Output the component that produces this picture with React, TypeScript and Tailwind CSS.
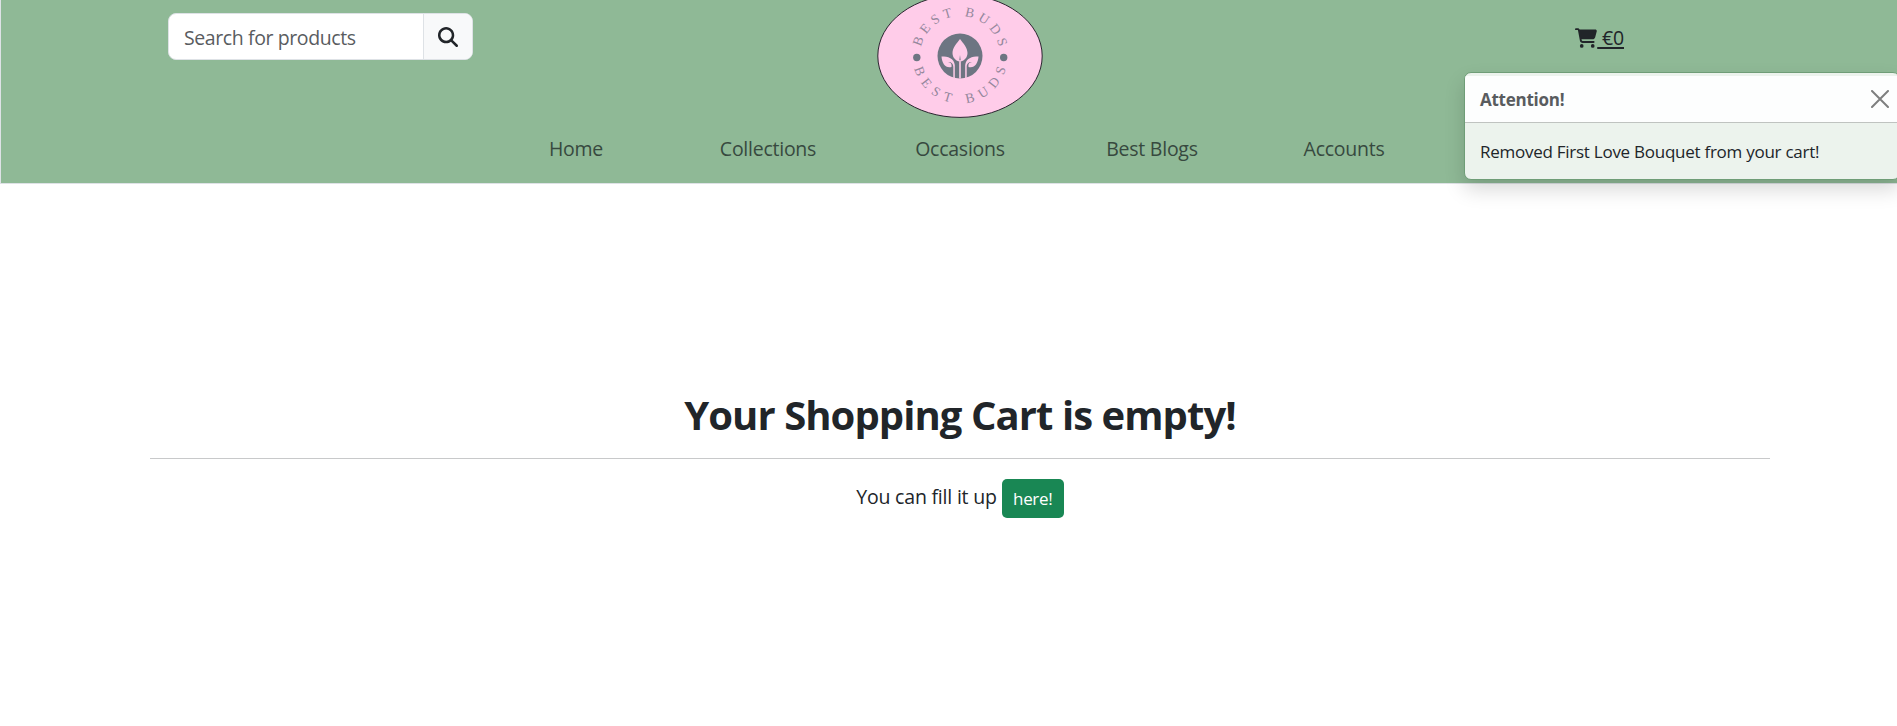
import { FaMagnifyingGlass, FaCartShopping } from "react-icons/fa6";

const links = ["Home", "Collections", "Occasions", "Best Blogs", "Accounts"];

function Logo() {
  return (
    <svg className="block h-[124px] w-[166px]" viewBox="0 0 166 124">
      <ellipse cx="83" cy="62" rx="82.2" ry="61.4" fill="#ffcce9" stroke="#2b2530" strokeWidth="1" />
      <defs>
        <path id="arcTop" d="M 43 62 A 40 40 0 0 1 123 62" />
        <path id="arcBottom" d="M 35.5 62 A 47.5 47.5 0 0 0 130.5 62" />
      </defs>
      <g fill="#94879c" fontFamily="'Liberation Serif', serif" fontSize="13.5" textAnchor="middle">
        <text textLength="107" lengthAdjust="spacing">
          <textPath href="#arcTop" startOffset="50%">BEST BUDS</textPath>
        </text>
        <text textLength="124" lengthAdjust="spacing">
          <textPath href="#arcBottom" startOffset="50%">BEST BUDS</textPath>
        </text>
      </g>
      <circle cx="39.8" cy="63.5" r="3.7" fill="#6d7582" />
      <circle cx="126.7" cy="63.5" r="3.7" fill="#6d7582" />
      <circle cx="83" cy="62" r="22.5" fill="#6d7582" />
      <g fill="#ffcce9">
        <path d="M83 45C86.500 49.500 90.500 54 90.500 59C90.500 63.500 87.500 66.500 83.800 67.500L83 61L82.200 67.500C78.500 66.500 75.500 63.500 75.500 59C75.500 54 79.500 49.500 83 45Z" />
        <path d="M64.500 62.500C71 62.500 77 64 77.800 71V84.200L76.300 83.800V73C76.300 69 73.500 67.500 71 68C74 68.500 75 70 74.500 73C68.500 74.500 65 69.500 64.500 62.500Z" />
        <path d="M101.500 62.500C95 62.500 89 64 88.200 71V84.200L89.700 83.800V73C89.700 69 92.500 67.500 95 68C92 68.500 91 70 91.500 73C97.500 74.500 101 69.500 101.500 62.500Z" />
        <path d="M82.200 66H83.800V84.500H82.200Z" />
      </g>
    </svg>
  );
}

export default function App() {
  return (
    <div className="relative h-[726px] w-full overflow-hidden bg-white font-['Open_Sans',sans-serif] text-[#212529]">
      <header className="h-[184px] w-[1920px] border-b border-l border-[#dee2e6] bg-[#8fb996]">
        <div className="flex h-[118px] items-start justify-between pl-[167px]">
          <form className="mt-[13px] flex h-[47px] w-[305px] overflow-hidden rounded-lg border border-[#dee2e6] bg-white">
            <div className="flex flex-1 items-center border-r border-[#dee2e6] pt-0.5 pl-[15px] text-[19.5px] tracking-[-0.4px] text-[#595c5f]">
              <span>Search for products</span>
            </div>
            <button type="button" aria-label="Search" className="flex w-12 items-center justify-center bg-[#f8f9fa]">
              <FaMagnifyingGlass className="size-5" />
            </button>
          </form>
          <div className="-mt-1.5 ml-[404px]">
            <Logo />
          </div>
          <a className="mt-6 mr-[296px] ml-auto flex h-7 items-start">
            <FaCartShopping className="mt-1 h-5 w-[22px]" />
            <span className="text-[19.5px] leading-7 tracking-[-0.2px] whitespace-pre underline decoration-2 underline-offset-2"> €0</span>
          </a>
        </div>
        <nav className="ml-[479px] flex w-[960px] pt-[17px]">
          {links.map((l) => (
            <a key={l} className="w-48 text-center text-[19.5px] leading-7 tracking-[-0.25px] text-[#37493f]">
              <span>{l}</span>
            </a>
          ))}
        </nav>
      </header>

      <main className="ml-[150px] w-[1620px] pt-[204px] text-center">
        <h1 className="h-[70px] text-[40px] leading-[54px] font-bold tracking-[-0.93px]">
          <span>Your Shopping Cart is empty!</span>
        </h1>
        <hr className="border-[#c8c9ca]" />
        <div className="mt-5 flex items-start justify-center">
          <p className="mr-[5px] text-[19.5px] leading-[35px] tracking-[-0.2px]">
            <span>You can fill it up</span>
          </p>
          <button type="button" className="h-[39px] w-[62px] rounded-[5px] bg-[#198754] text-[17px] tracking-[-0.3px] text-white">
            <span>here!</span>
          </button>
        </div>
      </main>

      <div className="absolute top-[72px] left-[1464px] w-[436px] overflow-hidden rounded-[7px] border border-[#6f9d77] bg-[#ecf3ed] pt-[3px] shadow-[0_10px_20px_rgba(0,0,0,0.15)]">
        <div className="flex h-[47px] items-center justify-between border-b border-[#bfc3c0] bg-[#fdfefe] px-[15px]">
          <strong className="pt-0.5 text-[17px] font-bold tracking-[-0.25px] text-[#595c5f]">Attention!</strong>
          <svg className="-mr-[5px] size-[18px]" viewBox="0 0 18 18" fill="none" stroke="#7e7f7f" strokeWidth="2" strokeLinecap="round">
            <path d="M1 1L17 17M17 1L1 17" />
          </svg>
        </div>
        <div className="h-14 px-[15px] pt-px text-[17px] leading-[56px] tracking-[-0.26px]">
          <span>Removed First Love Bouquet from your cart!</span>
        </div>
      </div>
    </div>
  );
}
